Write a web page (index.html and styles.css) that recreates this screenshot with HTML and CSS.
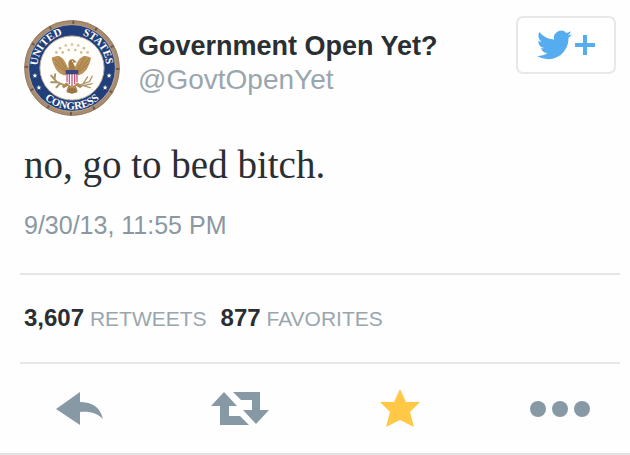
FILE: index.html
```
<!DOCTYPE html>
<html lang="en">
<head>
    <meta charset="UTF-8">
    <meta name="viewport" content="width=device-width, initial-scale=1.0">
    <title>Government Open Yet?</title>
    <link rel="stylesheet" href="styles.css">
</head>
<body>
    <article class="tweet">
        <header class="tweet-header">
            <svg class="avatar" viewBox="0 0 290 290" role="img" aria-label="United States Congress seal">
                <defs>
                    <path id="arcLeft" d="M58 202A104 104 0 0 1 183 48"/>
                    <path id="arcRight" d="M107 48A104 104 0 0 1 232 202"/>
                    <path id="arcBottom" d="M20 145a125 125 0 0 0 250 0"/>
                    <path id="star" d="M0-8l2 5.500h6l-5 3.500 2 6-5-3.500-5 3.500 2-6-5-3.500h6z"/>
                </defs>
                <circle cx="145" cy="145" r="144" fill="#a98c70"/>
                <circle cx="145" cy="145" r="138" fill="none" stroke="#6e5744" stroke-width="11" stroke-dasharray="6 66.260"/>
                <circle cx="145" cy="145" r="143" fill="none" stroke="#8d755f" stroke-width="2"/>
                <circle cx="145" cy="145" r="131" fill="#213f7b" stroke="#c9b9a4" stroke-width="2"/>
                <circle cx="145" cy="145" r="97" fill="#fffefa" stroke="#b9ab9a" stroke-width="3"/>
                <g class="seal-text">
                    <text><textPath href="#arcLeft" startOffset="50%">UNITED</textPath></text>
                    <text><textPath href="#arcRight" startOffset="50%">STATES</textPath></text>
                    <text><textPath href="#arcBottom" startOffset="50%">CONGRESS</textPath></text>
                </g>
                <g fill="#fff">
                    <use href="#star" x="33" y="168"/>
                    <use href="#star" x="45" y="204"/>
                    <use href="#star" x="257" y="168"/>
                    <use href="#star" x="245" y="204"/>
                </g>
                <g fill="#d3bd98">
                    <circle cx="98" cy="98" r="4"/><circle cx="109" cy="85" r="4"/>
                    <circle cx="126" cy="77" r="4"/><circle cx="145" cy="74" r="4"/>
                    <circle cx="164" cy="77" r="4"/><circle cx="181" cy="85" r="4"/>
                    <circle cx="192" cy="98" r="4"/><circle cx="117" cy="98" r="4"/>
                    <circle cx="135" cy="91" r="4"/><circle cx="155" cy="91" r="4"/>
                    <circle cx="173" cy="98" r="4"/>
                </g>
                <!-- eagle: wings, tail, branch and arrows, then the head and shield -->
                <path fill="#bb9257" d="M128 168c-16-2-28-12-34-24-6-12-10-22-10-30 6-3 14-5 22-5 8 4 15 10 20 21l7 14h20l7-14c5-11 12-17 20-21 8 0 16 2 22 5 0 8-4 18-10 30-6 12-18 22-34 24z"/>
                <path fill="none" stroke="#94703f" stroke-width="2" d="M92 117l36 38M94 131l32 27M106 114l22 34M198 117l-36 38M196 131l-32 27M184 114l-22 34"/>
                <path fill="#b08a52" d="M126 190l-12 10 6 6 14-8-7 18 18-4 18 4-7-18 14 8 6-6-12-10z"/>
                <path fill="none" stroke="#a89468" stroke-width="6" stroke-linecap="round" d="M120 196l-20-8-18-20M100 188l-18 0M92 180l2-16M108 193l-10 10"/>
                <path fill="none" stroke="#a89468" stroke-width="4" stroke-linecap="round" d="M170 196l28-10 8-16M172 200l34-8M178 194l14-22M184 200l16 4"/>
                <path fill="#a67d45" d="M134 133c0-12 8-17 17-13l9 8-12 1 6 12v14h-18z"/>
                <circle cx="147" cy="125" r="2" fill="#fff"/>
                <path fill="#fff" d="M127 152h36v28c0 10-8 16-18 21-10-5-18-11-18-21z"/>
                <path fill="none" stroke="#c9587c" stroke-width="4" d="M130 163v25M137 163v31M145 163v36M153 163v31M160 163v25"/>
                <path fill="#39477e" d="M126 151h38v13h-38z"/>
                <path fill="#9a7342" d="M136 206h18l7 12-16 5-16-5z"/>
            </svg>
            <div class="author">
                <h1 class="name">Government Open Yet?</h1>
                <a class="handle" href="#">@GovtOpenYet</a>
            </div>
            <button class="follow-btn" type="button" aria-label="Follow">
                <svg class="bird" viewBox="0 2 24 20">
                    <path d="M23.953 4.570a10 10 0 0 1-2.825.775 4.958 4.958 0 0 0 2.163-2.723c-.951.555-2.005.959-3.127 1.184a4.920 4.920 0 0 0-8.384 4.482C7.690 8.095 4.067 6.130 1.640 3.162a4.822 4.822 0 0 0-.666 2.475c0 1.710.870 3.213 2.188 4.096a4.904 4.904 0 0 1-2.228-.616v.060a4.923 4.923 0 0 0 3.946 4.827 4.996 4.996 0 0 1-2.212.085 4.936 4.936 0 0 0 4.604 3.417 9.867 9.867 0 0 1-6.102 2.105c-.390 0-.779-.023-1.170-.067a13.995 13.995 0 0 0 7.557 2.209c9.053 0 13.998-7.496 13.998-13.985 0-.210 0-.420-.015-.630A9.935 9.935 0 0 0 24 4.590z"/>
                </svg>
                <svg class="plus" viewBox="0 0 20 20">
                    <path d="M8 0h4v8h8v4h-8v8H8v-8H0V8h8z"/>
                </svg>
            </button>
        </header>

        <p class="tweet-text">no, go to bed bitch.</p>
        <time class="tweet-time" datetime="2013-09-30T23:55">9/30/13, 11:55 PM</time>

        <div class="stats">
            <span><strong>3,607</strong> RETWEETS</span>
            <span><strong>877</strong> FAVORITES</span>
        </div>

        <div class="actions">
            <button class="action-btn" type="button" aria-label="Reply">
                <svg viewBox="0 0 60 40">
                    <path d="M6 20L30 3v10c12 0 20 5 23 17-6-6-13-8-23-7v13z"/>
                </svg>
            </button>
            <button class="action-btn" type="button" aria-label="Retweet">
                <svg viewBox="0 0 60 40">
                    <path d="M14 3l13 14h-8v10h11l9 9H10V17H1zM23 3h27v18h9L46 35 33 21h9V11H31z"/>
                </svg>
            </button>
            <button class="action-btn favorited" type="button" aria-label="Favorite">
                <svg viewBox="0 0 60 40">
                    <path d="M30 0l6 13h14L40 23l4 15-14-7-14 7 4-15L10 13h14z"/>
                </svg>
            </button>
            <button class="action-btn" type="button" aria-label="More">
                <svg viewBox="0 0 60 40">
                    <circle cx="8" cy="20" r="8"/>
                    <circle cx="30" cy="20" r="8"/>
                    <circle cx="52" cy="20" r="8"/>
                </svg>
            </button>
        </div>
    </article>
</body>
</html>
```
FILE: styles.css
```
* {
    margin: 0;
    padding: 0;
    box-sizing: border-box;
}

body {
    font-family: 'Liberation Sans', Arial, sans-serif;
    background: #fefefe;
    color: #292f33;
}

.tweet {
    padding-top: 16px;
    border-bottom: 2px solid #e1e3e5;
}

.tweet-header {
    display: flex;
    align-items: flex-start;
    padding: 0 14px 0 24px;
}

.avatar {
    width: 96px;
    height: 96px;
    margin-top: 4px;
    flex-shrink: 0;
}

.seal-text {
    font-family: 'Liberation Serif', serif;
    font-size: 33px;
    font-weight: bold;
    fill: #fff;
    text-anchor: middle;
}

.author {
    flex: 1;
    padding: 13px 0 0 18px;
}

.name {
    font-size: 27px;
    line-height: 34px;
}

.handle {
    display: block;
    font-size: 28px;
    line-height: 34px;
    color: #9aa6ae;
    text-decoration: none;
}

.follow-btn {
    display: flex;
    align-items: center;
    justify-content: center;
    gap: 3px;
    width: 100px;
    height: 58px;
    background: #fff;
    border: 2px solid #e8e8e8;
    border-radius: 7px;
    fill: #55acee;
    cursor: pointer;
}

.bird {
    width: 35px;
    height: 30px;
}

.plus {
    width: 20px;
    height: 20px;
}

.tweet-text {
    padding: 27px 24px 0;
    font-family: 'Liberation Serif', Georgia, serif;
    font-size: 39px;
    line-height: 44px;
}

.tweet-time {
    display: block;
    padding: 23px 24px 33px;
    font-size: 25px;
    line-height: 30px;
    color: #8b98a2;
}

.stats {
    display: flex;
    gap: 14px;
    margin: 0 10px 0 20px;
    padding: 28px 4px;
    border-top: 2px solid #e6e6e6;
    border-bottom: 2px solid #e6e6e6;
    font-size: 21px;
    line-height: 30px;
    color: #9aa6ae;
}

.stats strong {
    font-size: 24px;
    color: #292f33;
}

.actions {
    display: flex;
    justify-content: space-between;
    padding: 25px 40px 24px 50px;
}

.action-btn {
    width: 60px;
    height: 40px;
    background: none;
    border: none;
    fill: #8899a6;
    cursor: pointer;
}

.action-btn svg {
    display: block;
    width: 60px;
    height: 40px;
}

.favorited {
    fill: #ffc846;
}
```
